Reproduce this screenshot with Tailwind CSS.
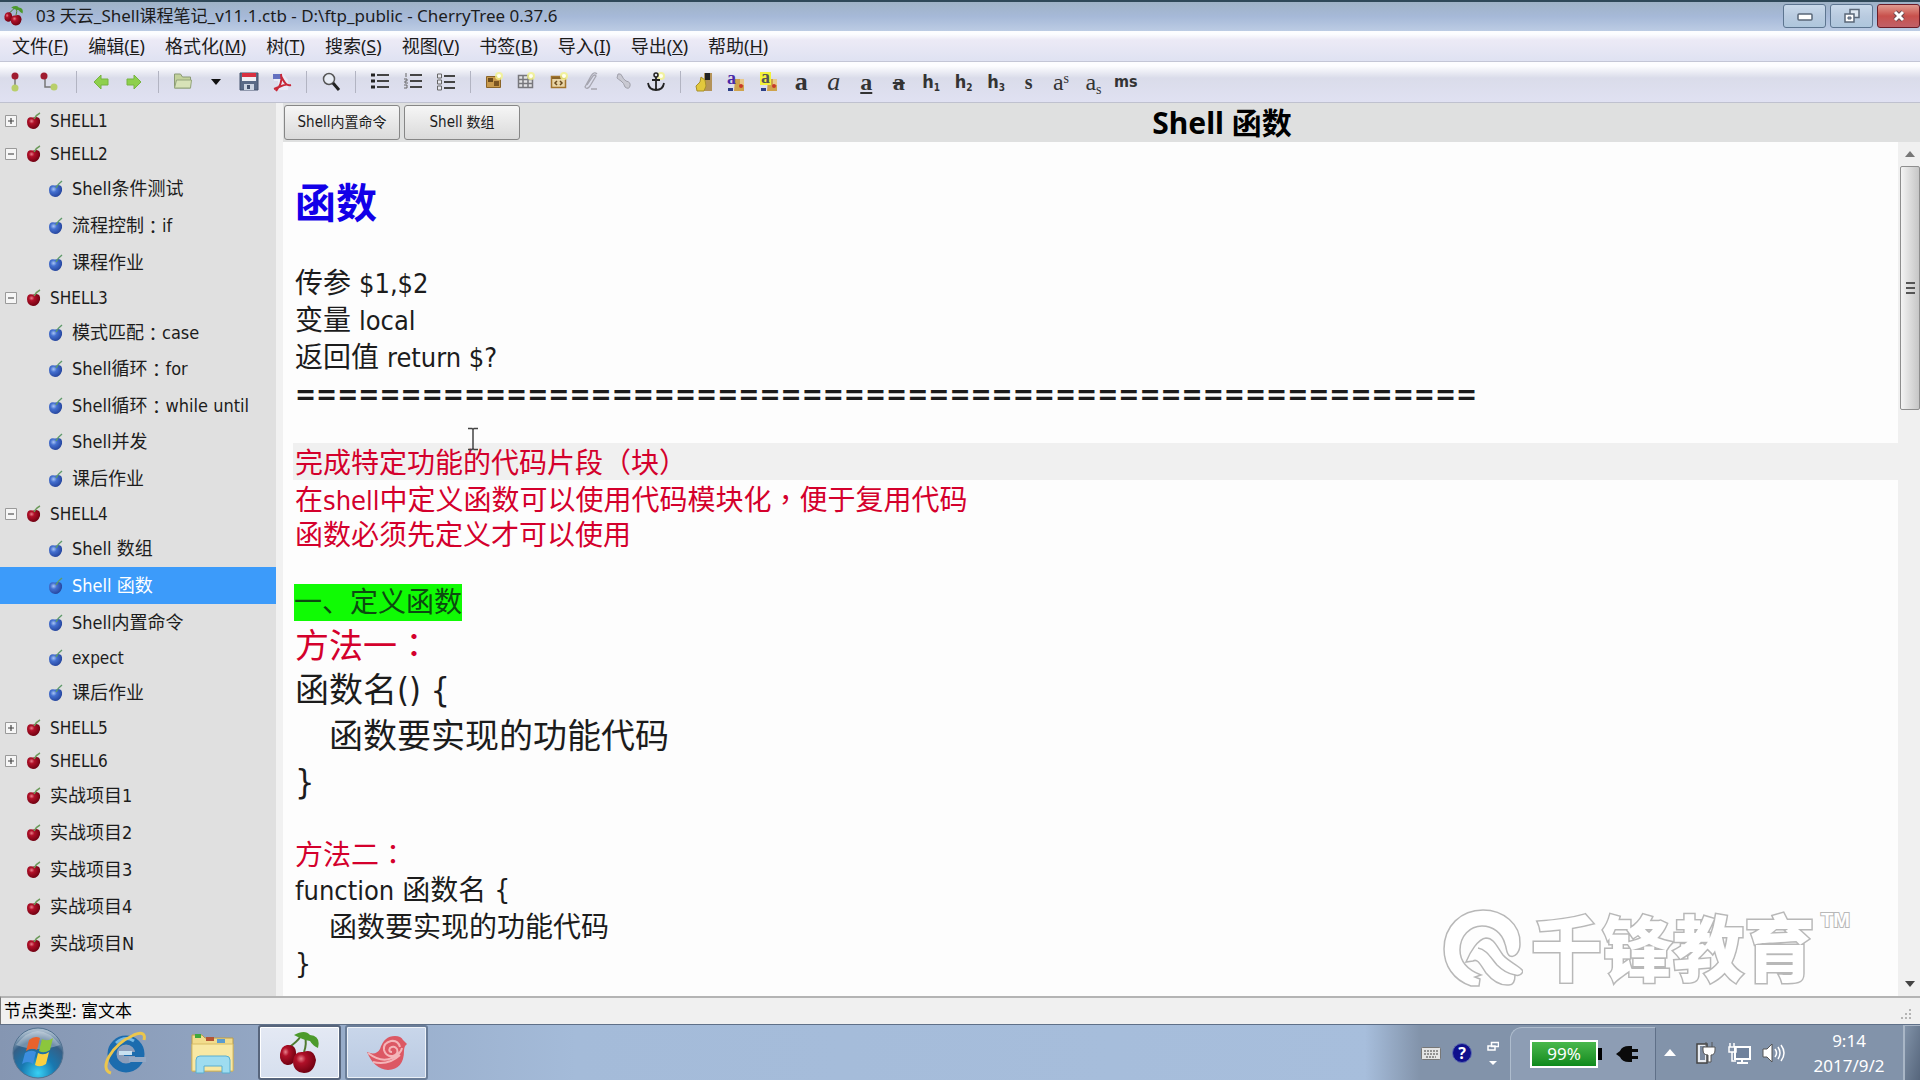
<!DOCTYPE html>
<html lang="zh-CN">
<head>
  <meta charset="UTF-8">
  <meta name="viewport" content="width=device-width, initial-scale=1.0">
  <title>03 天云_Shell课程笔记_v11.1.ctb - CherryTree</title>
  <!-- Tailwind CSS -->
  <script src="https://cdn.jsdelivr.net/npm/@tailwindcss/browser@4"></script>
</head>
<body class="h-screen flex flex-col overflow-hidden bg-white text-[#1c1c1c] font-['Noto_Sans','Noto_Sans_CJK_SC',sans-serif]">

  <!-- Shared icons -->
  <svg class="absolute w-0 h-0" aria-hidden="true">
    <defs>
      <radialGradient id="redBall" cx="35%" cy="35%" r="70%"><stop offset="0" stop-color="#e8808c"/><stop offset=".3" stop-color="#b01028"/><stop offset="1" stop-color="#6c0010"/></radialGradient>
      <radialGradient id="blueBall" cx="35%" cy="35%" r="70%"><stop offset="0" stop-color="#a8c4f4"/><stop offset=".35" stop-color="#4470d0"/><stop offset="1" stop-color="#23429a"/></radialGradient>
      <symbol id="cherry" viewBox="0 0 16 18"><path d="M7 5.500Q15 3 14 11 Q12 17 7 17 Q1 16 1 10 Q1 4 7 5.500Z" fill="url(#redBall)"/><path d="M8 7 Q10 3 14 1" fill="none" stroke="#6b9a5a" stroke-width="1.400"/></symbol>
      <symbol id="berry" viewBox="0 0 16 18"><path d="M7 5.500Q15 3 14 11 Q12 17 7 17 Q1 16 1 10 Q1 4 7 5.500Z" fill="url(#blueBall)"/><path d="M8 8 Q10 4 14 1" fill="none" stroke="#5f9a6a" stroke-width="1.500"/></symbol>
      <symbol id="plus" viewBox="0 0 12 12"><path d="M.5.5h11v11H.5z" fill="#f6f6f6" stroke="#9a9a9a"/><path d="M3 6h6M6 3v6" stroke="#444" stroke-width="1.200"/></symbol>
      <symbol id="minus" viewBox="0 0 12 12"><path d="M.5.5h11v11H.5z" fill="#f6f6f6" stroke="#9a9a9a"/><path d="M3 6h6" stroke="#555" stroke-width="1.200"/></symbol>
      <symbol id="cherries" viewBox="0 0 42 42">
        <path d="M9 16 Q18 10 22 4 M25 20 Q28 12 26 4" fill="none" stroke="#4f7a30" stroke-width="2"/>
        <path d="M15 3 Q26 -3 31 3 Q42 4 39 16 Q34 14 31 9 Q24 8 15 3Z" fill="#4c9a2c"/>
        <path d="M8 13 Q18 12 17 24 Q15 34 8 33 Q0 31 1 22 Q2 14 8 13Z" fill="url(#redBall)"/>
        <path d="M24 20 Q35 16 37 28 Q35 41 25 41 Q14 40 14 29 Q15 19 24 20Z" fill="url(#redBall)"/>
      </symbol>
      <symbol id="star" viewBox="0 0 8 8"><circle cx="4" cy="4" r="4" fill="#f4f48a" opacity=".8"/><circle cx="4" cy="4" r="2" fill="#fffff0"/></symbol>
      <symbol id="paint" viewBox="0 0 18 20"><path d="M8 7h9v12H7z" fill="#cfa34c"/><path d="M13 7h4v6h-4z" fill="#e9c98a"/><circle cx="14" cy="14" r="2" fill="#c83a2a"/><path d="M1 16h5v3H1z" fill="#2c3f86"/></symbol>
    </defs>
  </svg>

  <!-- Title bar -->
  <header class="h-[31px] shrink-0 flex items-center pb-[2px] border-t-2 border-[#2f4858] bg-linear-to-b from-[#9fb2c6] via-[#a6b9d8] to-[#bccce4]">
    <svg class="w-5 h-6 ml-1"><use href="#cherries"/></svg>
    <h1 class="ml-3 text-[17px] leading-6">03 天云_Shell课程笔记_v11.1.ctb - D:\ftp_public - CherryTree 0.37.6</h1>
    <div class="ml-auto flex gap-1">
      <button aria-label="最小化" class="w-[43px] h-6 flex items-center justify-center rounded-[3px] border border-[#5d7590] bg-linear-to-b from-[#c9d9ea] via-[#b9cbe0] to-[#aec6dc]">
        <svg class="w-4 h-3" viewBox="0 0 16 12"><rect x="1" y="4" width="14" height="6" rx="1" fill="#fff" stroke="#5a6778" stroke-width="1.500"/></svg>
      </button>
      <button aria-label="还原" class="w-[43px] h-6 flex items-center justify-center rounded-[3px] border border-[#5d7590] bg-linear-to-b from-[#c9d9ea] via-[#b9cbe0] to-[#aec6dc]">
        <svg class="w-[18px] h-4" viewBox="0 0 18 16"><path d="M7 1.500h9v8H7z" fill="#dfe8f2" stroke="#5a6778" stroke-width="1.500"/><path d="M2 6h9v8H2z" fill="#fff" stroke="#5a6778" stroke-width="1.500"/><path d="M5 9h3v2H5z" fill="#8799b0" stroke="#5a6778"/></svg>
      </button>
      <button aria-label="关闭" class="w-[43px] h-6 flex items-center justify-center rounded-[3px] border border-[#6b1c28] bg-linear-to-b from-[#e09a90] via-[#c8504c] to-[#c06068]">
        <svg class="w-4 h-4" viewBox="0 0 16 16"><path d="M4 4l8 8M12 4l-8 8" stroke="#6a4a50" stroke-width="5"/><path d="M4 4l8 8M12 4l-8 8" stroke="#fff" stroke-width="3"/></svg>
      </button>
    </div>
  </header>

  <!-- Menu bar -->
  <nav class="h-[31px] shrink-0 flex items-center gap-5 pl-3 text-lg leading-6 border-b border-[#c4c6d6] bg-linear-to-b from-[#fcfdff] from-10% via-[#eceaf6] via-30% to-[#dfe2f2]">
    <a href="#">文件(<u>F</u>)</a>
    <a href="#">编辑(<u>E</u>)</a>
    <a href="#">格式化(<u>M</u>)</a>
    <a href="#">树(<u>T</u>)</a>
    <a href="#">搜索(<u>S</u>)</a>
    <a href="#">视图(<u>V</u>)</a>
    <a href="#">书签(<u>B</u>)</a>
    <a href="#">导入(<u>I</u>)</a>
    <a href="#">导出(<u>X</u>)</a>
    <a href="#">帮助(<u>H</u>)</a>
  </nav>

  <!-- Toolbar -->
  <div class="h-[41px] shrink-0 flex items-center border-b border-[#bfc1cf] bg-linear-to-b from-[#fdfdff] from-10% via-[#dadcea] via-40% to-[#e0e1f2]">
    <div class="flex">
      <button aria-label="添加节点" class="w-[30px] flex justify-center"><svg class="w-4 h-5" viewBox="0 0 16 20"><path d="M8 3v14" stroke="#777" stroke-width="1.500"/><circle cx="8" cy="4" r="3.500" fill="#a01c30"/><circle cx="8" cy="16" r="3.500" fill="#b9cf6a"/></svg></button>
      <button aria-label="添加子节点" class="w-[38px] flex justify-center"><svg class="w-[18px] h-5" viewBox="0 0 18 20"><path d="M5 4v11h9" fill="none" stroke="#777" stroke-width="1.500"/><circle cx="4" cy="4" r="3.500" fill="#a01c30"/><circle cx="14" cy="15" r="3.500" fill="#b9cf6a"/></svg></button>
    </div>
    <div class="w-4 flex justify-center"><i class="w-px h-[22px] bg-[#b2b4c2]"></i></div>
    <div class="flex">
      <button aria-label="后退" class="w-[33px] flex justify-center"><svg class="w-4 h-4" viewBox="0 0 16 16"><path d="M1 8l7-7v4h7v6H8v4z" fill="#8ed04c" stroke="#76b440"/></svg></button>
      <button aria-label="前进" class="w-[33px] flex justify-center"><svg class="w-4 h-4" viewBox="0 0 16 16"><path d="M15 8L8 1v4H1v6h7v4z" fill="#8ed04c" stroke="#76b440"/></svg></button>
    </div>
    <div class="w-4 flex justify-center"><i class="w-px h-[22px] bg-[#b2b4c2]"></i></div>
    <div class="flex">
      <button aria-label="打开" class="w-[33px] flex justify-center"><svg class="w-5 h-[18px]" viewBox="0 0 20 18"><path d="M1.500 16V2h6l2 3h8v11z" fill="#c3d29c" stroke="#8a9a74"/><path d="M1.500 16l2-8h15l-1 8z" fill="#d8e3b8" stroke="#94a57c"/></svg></button>
      <button aria-label="最近文档" class="w-[33px] flex justify-center items-center"><svg class="w-[10px] h-[6px]" viewBox="0 0 10 6"><path d="M0 0h10L5 6z" fill="#111"/></svg></button>
      <button aria-label="保存" class="w-[33px] flex justify-center"><svg class="w-5 h-[19px]" viewBox="0 0 20 19"><path d="M1 1h18v17H1z" fill="#5a6a86" stroke="#44526c"/><path d="M3 1h14v4H3z" fill="#d83040"/><path d="M3 5h14v4H3z" fill="#eef0f4"/><path d="M5 12h10v6H5z" fill="#ccd4e2"/><path d="M8 13h3v4H8z" fill="#44526c"/></svg></button>
      <button aria-label="导出 PDF" class="w-[33px] flex justify-center"><svg class="w-5 h-5" viewBox="0 0 20 20"><path d="M2 2h9l5 6v10H6V9H2z" fill="#e9eaf6"/><path d="M1 2h9v5H1z" fill="#6370c0"/><path d="M9 4c4 8 6 10 10 9M2 17c6-2 12-6 14-4M9 2c2 8-2 13-5 17" fill="none" stroke="#c82838" stroke-width="2"/></svg></button>
    </div>
    <div class="w-4 flex justify-center"><i class="w-px h-[22px] bg-[#b2b4c2]"></i></div>
    <button aria-label="查找" class="w-[33px] flex justify-center"><svg class="w-5 h-5" viewBox="0 0 20 20"><circle cx="8" cy="7" r="5.500" fill="#e8ecf4" stroke="#555" stroke-width="1.500"/><path d="M12 11l6 7" stroke="#222" stroke-width="3"/></svg></button>
    <div class="w-4 flex justify-center"><i class="w-px h-[22px] bg-[#b2b4c2]"></i></div>
    <div class="flex">
      <button aria-label="项目符号列表" class="w-[33px] flex justify-center"><svg class="w-[18px] h-4" viewBox="0 0 18 16"><path d="M6 2h12M6 8h12M6 14h12" stroke="#444" stroke-width="2"/><path d="M0 2h4M0 8h4M0 14h4" stroke="#222" stroke-width="3"/></svg></button>
      <button aria-label="编号列表" class="w-[33px] flex justify-center"><svg class="w-[18px] h-4" viewBox="0 0 18 16"><path d="M6 2h12M6 8h12M6 14h12" stroke="#444" stroke-width="2"/><path d="M2 0v4M0 6h3v2H1v2h3M0 12h3v3H0" fill="none" stroke="#666"/></svg></button>
      <button aria-label="待办列表" class="w-[33px] flex justify-center"><svg class="w-[18px] h-[18px]" viewBox="0 0 18 18"><path d="M7 3h11M7 9h11M7 15h11" stroke="#444" stroke-width="2"/><path d="M.5 1h4v4h-4zM.5 7h4v4h-4zM.5 13h4v4h-4z" fill="#e8e8f0" stroke="#666"/></svg></button>
    </div>
    <div class="w-4 flex justify-center"><i class="w-px h-[22px] bg-[#b2b4c2]"></i></div>
    <div class="w-[194px] flex justify-between">
      <button aria-label="插入图像" class="w-8 flex justify-center"><svg class="w-[18px] h-[18px]" viewBox="0 0 18 18"><path d="M1.500 4.500h14v11h-14z" fill="#c99a4c" stroke="#8a6428"/><path d="M3 6h5v4H3z" fill="#6a4a1c"/><path d="M9 9h5v5H9z" fill="#7b5522"/><use href="#star" x="10" y="0" width="8" height="8"/></svg></button>
      <button aria-label="插入表格" class="w-8 flex justify-center"><svg class="w-[18px] h-[18px]" viewBox="0 0 18 18"><path d="M1.500 3.500h14v12h-14zM1.500 7.500h14M1.500 11.500h14M6 3.500v12M11 3.500v12" fill="#e2e2e4" stroke="#77777c" stroke-width="1.500"/><use href="#star" x="10" y="0" width="8" height="8"/></svg></button>
      <button aria-label="插入代码框" class="w-8 flex justify-center"><svg class="w-[18px] h-[18px]" viewBox="0 0 18 18"><path d="M1.500 4.500h14v11h-14z" fill="#e8d4a6" stroke="#a2742c" stroke-width="1.500"/><path d="M2 5h13v2H2z" fill="#8a6428"/><path d="M7 9l-2 2 2 2M10 9l2 2-2 2" fill="none" stroke="#6a4a1c" stroke-width="1.500"/><use href="#star" x="10" y="0" width="8" height="8"/></svg></button>
      <button aria-label="插入文件" class="w-8 flex justify-center"><svg class="w-[18px] h-[18px]" viewBox="0 0 18 18"><path d="M5 13L11 4q2-2 3 0L8 14q-3 4-5 1L9 4q3-5 6-2M9 17h6" fill="none" stroke="#a6a6b0" stroke-width="1.300"/></svg></button>
      <button aria-label="插入链接" class="w-8 flex justify-center"><svg class="w-[18px] h-[18px]" viewBox="0 0 18 18"><path d="M3 2q3-1 4 2t4 5q5 1 4 5t-5 1q-1-4-4-6t-4-3z" fill="#c9c9d2" stroke="#a0a0aa"/></svg></button>
      <button aria-label="插入锚点" class="w-8 flex justify-center"><svg class="w-[18px] h-5" viewBox="0 0 18 20"><use href="#star" x="10" y="0" width="8" height="8"/><circle cx="9" cy="3" r="2" fill="none" stroke="#222" stroke-width="1.500"/><path d="M9 5v13M5 8h8M1 11q1 7 8 7t8-7" fill="none" stroke="#222" stroke-width="1.800"/></svg></button>
    </div>
    <div class="w-4 flex justify-center"><i class="w-px h-[22px] bg-[#b2b4c2]"></i></div>
    <div class="w-[454px] h-8 flex justify-between items-center font-['Liberation_Serif',serif] text-2xl leading-7 text-[#333]">
      <button aria-label="应用上次格式" class="w-8 flex justify-center"><svg class="w-[18px] h-5" viewBox="0 0 18 20"><path d="M9 1h8v18H9z" fill="#b4935a"/><path d="M10 1h5v7h-5z" fill="#222"/><path d="M6 5l4 3 1 6-2 5H2l-1-5 4-4z" fill="#e2c83c" stroke="#a8902a"/></svg></button>
      <button aria-label="文字颜色" class="w-8 flex justify-center"><svg class="w-[18px] h-5" viewBox="0 0 18 20"><use href="#paint"/><text x="0" y="12" font-size="18" font-weight="700" fill="#4a2aa8">a</text></svg></button>
      <button aria-label="背景颜色" class="w-8 flex justify-center"><svg class="w-[18px] h-5" viewBox="0 0 18 20"><use href="#paint"/><path d="M0 0h11v13H0z" fill="#f2f23a"/><text x="1" y="11" font-size="18" font-weight="700" fill="#555">a</text></svg></button>
      <button class="w-8 font-bold text-[26px]">a</button>
      <button class="w-8 italic text-[26px]">a</button>
      <button class="w-8 underline font-bold">a</button>
      <button class="w-8 line-through font-bold">a</button>
      <button class="w-8 font-['DejaVu_Sans_Condensed'] font-bold text-lg leading-7">h<sub class="text-[10px]">1</sub></button>
      <button class="w-8 font-['DejaVu_Sans_Condensed'] font-bold text-lg leading-7">h<sub class="text-[10px]">2</sub></button>
      <button class="w-8 font-['DejaVu_Sans_Condensed'] font-bold text-lg leading-7">h<sub class="text-[10px]">3</sub></button>
      <button class="w-8 font-bold text-xl leading-7">s</button>
      <button class="w-8">a<sup class="text-sm">s</sup></button>
      <button class="w-8">a<sub class="text-sm">s</sub></button>
      <button class="w-8 font-['DejaVu_Sans_Condensed'] font-bold text-base leading-7">ms</button>
    </div>
  </div>

  <!-- Tree and editor -->
  <div class="flex-1 min-h-0 flex font-['DejaVu_Sans_Condensed','Noto_Sans_CJK_SC',sans-serif]">

    <!-- Node tree -->
    <aside class="w-[276px] shrink-0 bg-[#e0e0e0] pt-px">
      <ul class="text-lg leading-6">
        <li class="h-[33px] flex items-center pl-[5px] text-[17px]"><svg class="w-3 h-3"><use href="#plus"/></svg><svg class="w-4 h-[18px] ml-[9px] mr-2"><use href="#cherry"/></svg>SHELL1</li>
        <li class="h-[33px] flex items-center pl-[5px] text-[17px]"><svg class="w-3 h-3"><use href="#minus"/></svg><svg class="w-4 h-[18px] ml-[9px] mr-2"><use href="#cherry"/></svg>SHELL2</li>
        <li class="h-[37px] flex items-center pl-12"><svg class="w-4 h-[18px] mr-2"><use href="#berry"/></svg>Shell条件测试</li>
        <li class="h-[37px] flex items-center pl-12"><svg class="w-4 h-[18px] mr-2"><use href="#berry"/></svg>流程控制<span lang="zh-TW" class="font-['Noto_Sans_CJK_TC']">：</span>if</li>
        <li class="h-[37px] flex items-center pl-12"><svg class="w-4 h-[18px] mr-2"><use href="#berry"/></svg>课程作业</li>
        <li class="h-[33px] flex items-center pl-[5px] text-[17px]"><svg class="w-3 h-3"><use href="#minus"/></svg><svg class="w-4 h-[18px] ml-[9px] mr-2"><use href="#cherry"/></svg>SHELL3</li>
        <li class="h-[37px] flex items-center pl-12"><svg class="w-4 h-[18px] mr-2"><use href="#berry"/></svg>模式匹配<span lang="zh-TW" class="font-['Noto_Sans_CJK_TC']">：</span>case</li>
        <li class="h-9 flex items-center pl-12"><svg class="w-4 h-[18px] mr-2"><use href="#berry"/></svg>Shell循环<span lang="zh-TW" class="font-['Noto_Sans_CJK_TC']">：</span>for</li>
        <li class="h-[37px] flex items-center pl-12"><svg class="w-4 h-[18px] mr-2"><use href="#berry"/></svg>Shell循环<span lang="zh-TW" class="font-['Noto_Sans_CJK_TC']">：</span>while until</li>
        <li class="h-9 flex items-center pl-12"><svg class="w-4 h-[18px] mr-2"><use href="#berry"/></svg>Shell并发</li>
        <li class="h-[37px] flex items-center pl-12"><svg class="w-4 h-[18px] mr-2"><use href="#berry"/></svg>课后作业</li>
        <li class="h-[33px] flex items-center pl-[5px] text-[17px]"><svg class="w-3 h-3"><use href="#minus"/></svg><svg class="w-4 h-[18px] ml-[9px] mr-2"><use href="#cherry"/></svg>SHELL4</li>
        <li class="h-[37px] flex items-center pl-12"><svg class="w-4 h-[18px] mr-2"><use href="#berry"/></svg>Shell 数组</li>
        <li class="h-[37px] flex items-center pl-12 bg-[#3c9bfa] text-white"><svg class="w-4 h-[18px] mr-2"><use href="#berry"/></svg>Shell 函数</li>
        <li class="h-[37px] flex items-center pl-12"><svg class="w-4 h-[18px] mr-2"><use href="#berry"/></svg>Shell内置命令</li>
        <li class="h-[33px] flex items-center pl-12 text-[17px]"><svg class="w-4 h-[18px] mr-2"><use href="#berry"/></svg>expect</li>
        <li class="h-[37px] flex items-center pl-12"><svg class="w-4 h-[18px] mr-2"><use href="#berry"/></svg>课后作业</li>
        <li class="h-[33px] flex items-center pl-[5px] text-[17px]"><svg class="w-3 h-3"><use href="#plus"/></svg><svg class="w-4 h-[18px] ml-[9px] mr-2"><use href="#cherry"/></svg>SHELL5</li>
        <li class="h-[33px] flex items-center pl-[5px] text-[17px]"><svg class="w-3 h-3"><use href="#plus"/></svg><svg class="w-4 h-[18px] ml-[9px] mr-2"><use href="#cherry"/></svg>SHELL6</li>
        <li class="h-[37px] flex items-center pl-[26px]"><svg class="w-4 h-[18px] mr-2"><use href="#cherry"/></svg>实战项目1</li>
        <li class="h-[37px] flex items-center pl-[26px]"><svg class="w-4 h-[18px] mr-2"><use href="#cherry"/></svg>实战项目2</li>
        <li class="h-[37px] flex items-center pl-[26px]"><svg class="w-4 h-[18px] mr-2"><use href="#cherry"/></svg>实战项目3</li>
        <li class="h-[37px] flex items-center pl-[26px]"><svg class="w-4 h-[18px] mr-2"><use href="#cherry"/></svg>实战项目4</li>
        <li class="h-[37px] flex items-center pl-[26px]"><svg class="w-4 h-[18px] mr-2"><use href="#cherry"/></svg>实战项目N</li>
      </ul>
    </aside>
    <div class="w-[7px] shrink-0 bg-[#f1f1f1]"></div>

    <!-- Editor -->
    <div class="flex-1 min-w-0 flex flex-col">
      <div class="h-[39px] shrink-0 flex items-center gap-1 pl-px bg-[#dfe0e0]">
        <button class="w-[116px] h-[35px] rounded-[3px] border border-[#868686] bg-linear-to-b from-[#f6f6f6] to-[#dadada] text-sm"><span class="text-[15px]">Shell</span>内置命令</button>
        <button class="w-[116px] h-[35px] rounded-[3px] border border-[#868686] bg-linear-to-b from-[#f6f6f6] to-[#dadada] text-sm"><span class="text-[15px]">Shell</span> 数组</button>
        <h2 class="flex-1 text-center text-[30px] leading-9 font-bold text-black font-['Noto_Sans','Noto_Sans_CJK_SC',sans-serif]">Shell 函数</h2>
      </div>

      <div class="flex-1 min-h-0 flex">
        <main class="relative flex-1 min-w-0 overflow-hidden bg-[#fdfdfd] pt-9 text-[28px] leading-[37px] whitespace-nowrap">
          <h3 class="pl-3 mb-[35px] text-[41px] leading-[52px] font-bold text-[#1200e8]">函数</h3>
          <p class="h-[37px] pl-3">传参 <span class="text-[27px]">$1,$2</span></p>
          <p class="h-[37px] pl-3">变量 <span class="text-[27px]">local</span></p>
          <p class="h-[37px] pl-3">返回值 <span class="text-[27px]">return $?</span></p>
          <p class="h-[37px] pl-3 mb-[30px] font-bold">========================================================</p>
          <p class="h-[37px] ml-[10px] pl-[2px] bg-[#f0f0f0] text-[#d4002c]">完成特定功能的代码片段<span lang="zh-TW" class="font-['Noto_Sans_CJK_TC']">（</span>块<span lang="zh-TW" class="font-['Noto_Sans_CJK_TC']">）</span></p>
          <p class="h-[37px] pl-3 text-[#d4002c]">在<span class="text-[27px]">shell</span>中定义函数可以使用代码模块化<span lang="zh-TW" class="font-['Noto_Sans_CJK_TC']">，</span>便于复用代码</p>
          <p class="h-[37px] pl-3 mb-[30px] text-[#d4002c]">函数必须先定义才可以使用</p>
          <p class="h-[37px] pl-[11px]"><mark class="inline-block h-[37px] bg-[#10fb04] text-[#0c4a10]">一、定义函数</mark></p>
          <div class="text-[34px] leading-[46px]">
            <p class="h-[46px] pl-3 text-[#d4002c]">方法一<span lang="zh-TW" class="font-['Noto_Sans_CJK_TC']">：</span></p>
            <p class="h-[46px] pl-3">函数名() {</p>
            <p class="h-[46px] pl-[46px]">函数要实现的功能代码</p>
            <p class="h-[46px] pl-3 mb-[30px]">}</p>
          </div>
          <p class="h-[37px] pl-3 text-[#d4002c]">方法二<span lang="zh-TW" class="font-['Noto_Sans_CJK_TC']">：</span></p>
          <p class="h-[37px] pl-3"><span class="text-[27px]">function</span> 函数名 {</p>
          <p class="h-[37px] pl-[46px]">函数要实现的功能代码</p>
          <p class="h-[37px] pl-3">}</p>

          <!-- Text cursor -->
          <svg class="absolute left-[184px] top-[285px] w-3 h-6" viewBox="0 0 12 24"><path d="M1 1.500h4l1 1 1-1h4M6 2v20M1 22.500h4l1-1 1 1h4" fill="none" stroke="#444" stroke-width="1.500"/></svg>

          <!-- Watermark -->
          <div class="absolute right-12 bottom-2 flex items-start text-white">
            <svg class="w-20 h-20 mt-2 mr-2" viewBox="0 0 80 80" fill="#fff" stroke="#b8b8b8" stroke-width="1.500">
              <path d="M28 78C10 72 1 57 1 41 1 18 18 2 40 2c20 0 38 14 37 34 0 8-5 14-10 12-4-2-3-7-5-12C59 25 50 18 39 18 27 18 17 28 17 42c0 12 8 20 21 25l-6 2 5 2-1 7z"/>
              <path d="M23 54c4-10 12-23 20-24 8 0 11 9 17 17 6 7 17 11 20 16-1 4-5 5-8 4 0 5-1 10-6 10-10 1-18-6-23-12-5-7-8-15-13-12z"/>
              <path d="M35 40c8 1 13 10 19 17 6 6 12 9 18 10" fill="none"/>
            </svg>
            <span class="text-[71px] leading-[88px] font-black font-['Noto_Sans_CJK_SC'] [-webkit-text-stroke:3px_#b8b8b8] [paint-order:stroke_fill]">千锋教育</span>
            <span class="mt-2 ml-[6px] text-[20px] leading-6 font-bold font-['Liberation_Sans'] [-webkit-text-stroke:2px_#b8b8b8] [paint-order:stroke_fill]">TM</span>
          </div>
        </main>

        <!-- Scrollbar -->
        <div class="w-[22px] shrink-0 flex flex-col items-end bg-[#f0f0f0]">
          <div class="w-5 h-6 flex items-center justify-center"><svg class="w-[10px] h-[6px]" viewBox="0 0 10 6"><path d="M0 6h10L5 0z" fill="#777"/></svg></div>
          <div class="w-5 h-[244px] flex flex-col items-center justify-center gap-[3px] border border-[#8e8e8e] rounded-[2px] bg-linear-to-r from-[#f4f4f4] via-[#dcdcdc] to-[#c6c6c6]">
            <i class="w-[9px] h-[2px] bg-[#555]"></i>
            <i class="w-[9px] h-[2px] bg-[#555]"></i>
            <i class="w-[9px] h-[2px] bg-[#555]"></i>
          </div>
          <div class="mt-auto w-5 h-6 flex items-center justify-center"><svg class="w-[10px] h-[6px]" viewBox="0 0 10 6"><path d="M0 0h10L5 6z" fill="#444"/></svg></div>
        </div>
      </div>
    </div>
  </div>

  <!-- Status bar -->
  <div class="h-7 shrink-0 flex items-center pl-[3px] border-t-2 border-l border-t-[#b4b4b4] border-l-[#777] bg-[#f0f0f0] text-[17px] leading-6 text-black">
    节点类型: 富文本
    <svg class="ml-auto mr-2 mt-2 w-3 h-3" viewBox="0 0 12 12" fill="#b4b4b4"><path d="M9 0h2v2H9zM5 4h2v2H5zM9 4h2v2H9zM1 8h2v2H1zM5 8h2v2H5zM9 8h2v2H9z"/></svg>
  </div>

  <!-- Taskbar -->
  <footer class="h-14 shrink-0 flex items-center border-t border-[#5f7088] text-white bg-linear-to-r from-[#8596b2] via-[#a4bbd9] via-30% to-[#a9c0de]">
    <button aria-label="开始" class="ml-3 w-[52px]">
      <svg class="w-[52px] h-[52px]" viewBox="0 0 52 52">
        <defs><radialGradient id="orb" cx="50%" cy="90%" r="85%"><stop offset="0" stop-color="#38d0f4"/><stop offset=".4" stop-color="#1878b0"/><stop offset=".75" stop-color="#355f86"/><stop offset="1" stop-color="#a9bccd"/></radialGradient></defs>
        <circle cx="26" cy="26" r="25" fill="url(#orb)" stroke="#51718f"/>
        <path d="M4 18Q26-10 48 18Q26 26 4 18Z" fill="#fff" opacity=".3"/>
        <path d="M17 13q6-5 11-2l-3 12q-5-3-11 1z" fill="#e8622c"/>
        <path d="M30 12q6 3 11-1l-3 12q-6 4-11 1z" fill="#8cc63c"/>
        <path d="M13 26q6-4 11-1l-3 12q-5-4-11 0z" fill="#3c8ee0"/>
        <path d="M26 26q6 3 11-1l-3 12q-6 4-11 1z" fill="#fad040"/>
      </svg>
    </button>
    <button aria-label="Internet Explorer" class="ml-[38px] w-11">
      <svg class="w-11 h-11" viewBox="0 0 44 44">
        <circle cx="24" cy="23" r="14" fill="none" stroke="#1c6cae" stroke-width="9"/>
        <path d="M22 21h18v4H22z" fill="#1c6cae"/><path d="M27 26h17v5H27z" fill="#94a9c5"/><path d="M17 20h13v4H17z" fill="#c8e0f0"/>
        <path d="M14 12q9-8 18-2" fill="none" stroke="#74b8e4" stroke-width="3"/>
        <path d="M9 42C-4 38 10 14 30 5c8-4 14-4 12 4" fill="none" stroke="#ecc64c" stroke-width="3"/>
      </svg>
    </button>
    <button aria-label="资源管理器" class="ml-11 w-[46px]">
      <svg class="w-[46px] h-[42px]" viewBox="0 0 46 42">
        <path d="M2 39V3h10l3 3h28v33z" fill="#f2dc8c" stroke="#b89c4c"/><path d="M5 2h6v4H5z" fill="#3fa83c"/><path d="M16 5h8v4h-8z" fill="#b45434"/><path d="M27 7h8v4h-8z" fill="#5a9cd0"/>
        <path d="M2 12h41v27H2z" fill="#f8e8a4" stroke="#d8bc64"/>
        <path d="M6 41V28q0-4 4-4h26q4 0 4 4v13h-8v-7H14v7z" fill="#9edcf0" stroke="#5aaed0"/>
      </svg>
    </button>
    <button aria-label="CherryTree" class="ml-[22px] w-[83px] h-[55px] flex items-center justify-center rounded-[3px] border-2 border-[#57657c] bg-linear-to-b from-[#e4e9f4] to-[#d6dfee] ring-1 ring-inset ring-white"><svg class="w-[42px] h-[42px]"><use href="#cherries"/></svg></button>
    <button aria-label="FastStone" class="ml-1 w-[83px] h-[55px] flex items-center justify-center rounded-[3px] border-2 border-[#6a7d98] bg-linear-to-b from-[#c9d6ea] to-[#b9cae2] ring-1 ring-inset ring-white/70">
      <svg class="w-[42px] h-9" viewBox="0 0 42 36">
        <path d="M1 17q9 4 13-3Q18 1 29 1q6 0 8 4l4 4q-3 2-3 7 0 18-16 19Q8 34 1 17Z" fill="#dc5864"/>
        <path d="M34 12q-2-7-9-6-8 2-7 9 2 7 9 6 6-2 4-7-3-4-7-1-2 4 2 4M2 18q13 10 24 5 9-4 10-10M7 27q15 4 27-7" fill="none" stroke="#f4b4b8" stroke-width="2"/>
      </svg>
    </button>

    <!-- Tray -->
    <div class="ml-auto h-full flex items-center bg-linear-to-r from-transparent to-[#8293aa] to-10% pl-14">
      <svg class="w-5 h-[14px]" viewBox="0 0 20 14"><rect x=".5" y="1.500" width="19" height="12" rx="1" fill="#e4e4e4" stroke="#777"/><path d="M3 5h14M3 8h14M5 11h10" stroke="#777" stroke-width="1.500" stroke-dasharray="2 1"/></svg>
      <span class="ml-[11px] w-5 h-5 rounded-full bg-[#10108c] border border-[#5c6cb0] text-center text-base leading-[18px] font-bold">?</span>
      <svg class="ml-[15px] w-3 h-7" viewBox="0 0 12 28"><path d="M4.500 3.500h7v4h-7zM1 7h7v4H1z" fill="#8293aa" stroke="#fff" stroke-width="1.500"/><path d="M2 22h8l-4 4z" fill="#fff"/></svg>
      <div class="ml-[11px] w-[146px] h-[53px] self-end flex items-center pl-[19px] rounded-tl-xl border-t border-l border-r border-[#aebccd] border-r-[#5f7088] bg-[#8d9db4]">
        <span class="w-[68px] h-[28px] border-2 border-white bg-linear-to-b from-[#48b84c] to-[#0c8a1c] text-center text-[17px] leading-6">99%</span>
        <i class="w-1 h-3 bg-black"></i>
        <svg class="ml-[14px] w-[22px] h-[18px]" viewBox="0 0 22 18"><path d="M0 9l4-3q2-5 9-5h3v3h6v3h-6v4h6v3h-6v3h-3q-7 0-9-5z" fill="#0a0a0a"/></svg>
      </div>
      <svg class="ml-2 w-3 h-[7px]" viewBox="0 0 12 7"><path d="M0 7h12L6 0z" fill="#fff"/></svg>
      <svg class="ml-[18px] w-[22px] h-6" viewBox="0 0 22 24"><path d="M3 3h10v19H3z" fill="#e8ecf2" stroke="#444" stroke-width="1.500"/><path d="M6 5h5v14H6z" fill="#7d8ba0"/><path d="M12 1v5M18 1v5M9 6h12v3q0 5-4 5v7h-3v-7q-5 0-5-5z" fill="#fff" stroke="#555"/></svg>
      <svg class="ml-3 w-6 h-6" viewBox="0 0 24 24"><path d="M7 6h15v12H7z" fill="#70829c" stroke="#fff" stroke-width="2"/><path d="M14 18v4M9 22h11" stroke="#fff" stroke-width="2"/><path d="M2 2v4M6 2v4M1 6h7v5H1zM4 11v9h4" fill="none" stroke="#fff" stroke-width="1.500"/></svg>
      <svg class="ml-[10px] w-6 h-5" viewBox="0 0 24 20"><path d="M1 6h4l5-5v18l-5-5H1z" fill="#fff" stroke="#555"/><path d="M13 6q3 4 0 8M16 4q4 6 0 12M19 2q6 8 0 16" fill="none" stroke="#fff" stroke-width="1.500"/></svg>
      <div class="ml-6 w-[78px] text-center text-[17px] leading-[25px]">
        <p>9:14</p>
        <p>2017/9/2</p>
      </div>
      <button aria-label="显示桌面" class="ml-[15px] w-[17px] h-full border-l-2 border-t border-[#a9b6c6] bg-linear-to-br from-[#8192a8] to-[#56667c]"></button>
    </div>
  </footer>

</body>
</html>
